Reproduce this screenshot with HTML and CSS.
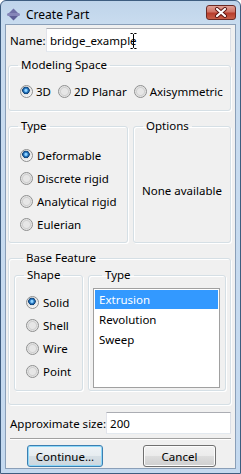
FILE: index.html
```html
<!DOCTYPE html>
<html lang="en">
<head>
  <meta charset="UTF-8">
  <title>Create Part</title>
  <link rel="stylesheet" href="styles.css">
</head>
<body>
  <div class="window">
    <div class="titlebar">
      <svg class="app-icon" width="13" height="13" viewBox="0 0 13 13">
        <polygon points="6.5,0.5 11,5 2,5" fill="#6f6fa6"/>
        <polygon points="6.5,12.5 11,8 2,8" fill="#5d5d96"/>
        <rect x="0" y="5" width="13" height="3" rx="1.5" fill="#8585b8"/>
      </svg>
      <span class="title">Create Part</span>
      <div class="close-btn">
        <svg width="14" height="11" viewBox="0 0 14 11">
          <path d="M3 2 L11 9 M11 2 L3 9" stroke="#5b1410" stroke-width="4" stroke-linecap="round"/>
          <path d="M3 2 L11 9 M11 2 L3 9" stroke="#fff" stroke-width="2.2" stroke-linecap="round"/>
        </svg>
      </div>
    </div>

    <div class="client">
      <div class="field-row name-row">
        <label>Name:</label>
        <div class="textbox name-box">
          <span>bridge_example</span>
          <svg class="ibeam" width="7" height="16" viewBox="0 0 7 16">
            <path d="M0.5 0.5 H2.5 L3.5 1.5 L4.5 0.5 H6.5 M3.5 1.5 V14.5 M0.5 15.5 H2.5 L3.5 14.5 L4.5 15.5 H6.5" stroke="#000" stroke-width="1" fill="none"/>
          </svg>
        </div>
      </div>

      <fieldset class="group space-group">
        <legend>Modeling Space</legend>
        <div class="radio-line">
          <span class="radio checked"></span><span class="radio-text">3D</span>
          <span class="radio"></span><span class="radio-text">2D Planar</span>
          <span class="radio"></span><span class="radio-text">Axisymmetric</span>
        </div>
      </fieldset>

      <div class="pair">
        <fieldset class="group type-group">
          <legend>Type</legend>
          <div class="radio-list">
            <div class="radio-item"><span class="radio checked"></span>Deformable</div>
            <div class="radio-item"><span class="radio"></span>Discrete rigid</div>
            <div class="radio-item"><span class="radio"></span>Analytical rigid</div>
            <div class="radio-item"><span class="radio"></span>Eulerian</div>
          </div>
        </fieldset>
        <fieldset class="group options-group">
          <legend>Options</legend>
          <div class="none-text">None available</div>
        </fieldset>
      </div>

      <fieldset class="group base-group">
        <legend>Base Feature</legend>
        <div class="pair inner-pair">
          <fieldset class="group shape-group">
            <legend>Shape</legend>
            <div class="radio-list">
              <div class="radio-item"><span class="radio checked"></span>Solid</div>
              <div class="radio-item"><span class="radio"></span>Shell</div>
              <div class="radio-item"><span class="radio"></span>Wire</div>
              <div class="radio-item"><span class="radio"></span>Point</div>
            </div>
          </fieldset>
          <fieldset class="group list-group">
            <legend>Type</legend>
            <div class="listbox">
              <div class="list-item selected">Extrusion</div>
              <div class="list-item">Revolution</div>
              <div class="list-item">Sweep</div>
            </div>
          </fieldset>
        </div>
      </fieldset>

      <div class="field-row size-row">
        <label>Approximate size:</label>
        <div class="textbox size-box">200</div>
      </div>

      <div class="separator"></div>

      <div class="buttons">
        <div class="button default">Continue...</div>
        <div class="button">Cancel</div>
      </div>
    </div>
  </div>
</body>
</html>
```

FILE: styles.css
```css
html, body {
  margin: 0;
  padding: 0;
}

body {
  width: 241px;
  height: 474px;
  font-family: 'Noto Sans', 'Open Sans', sans-serif;
  font-size: 11.5px;
  color: #000;
  overflow: hidden;
}

.window {
  box-sizing: border-box;
  width: 241px;
  height: 474px;
  border: 1px solid #3e5d80;
  border-radius: 6px 6px 0 0;
  background: linear-gradient(to bottom, #bfd4ea 0px, #c9dcef 24px, #c4d9ef 100%);
  display: flex;
  flex-direction: column;
  padding: 0 4px 4px 4px;
}

.titlebar {
  height: 23px;
  display: flex;
  align-items: center;
  padding-left: 2px;
}

.app-icon {
  margin-top: 3px;
}

.title {
  margin-left: 6px;
  margin-top: 4px;
  font-size: 12px;
}

.close-btn {
  margin-left: auto;
  margin-right: 0;
  align-self: flex-start;
  margin-top: 4px;
  width: 30px;
  height: 15px;
  box-sizing: border-box;
  border: 1px solid #6b2a25;
  border-radius: 3px;
  background: linear-gradient(to bottom, #e0a096 0%, #d17466 45%, #b83d2c 55%, #c85f48 100%);
  display: flex;
  align-items: center;
  justify-content: center;
}

.client {
  flex: 1;
  background: #f0f0f0;
  border: 1px solid #8a9fb8;
  padding: 3px 4px 0 2px;
}

.field-row {
  display: flex;
  align-items: center;
}

.field-row label {
  margin-left: 2px;
  white-space: nowrap;
}

.textbox {
  box-sizing: border-box;
  background: #fff;
  border: 1px solid #abadb3;
  border-right-color: #dbdfe6;
  border-bottom-color: #e3e9ef;
  border-left-color: #e2e3ea;
  display: flex;
  align-items: center;
  padding-left: 3px;
}

.name-box {
  position: relative;
  margin-left: auto;
  width: 185px;
  height: 24px;
}

.ibeam {
  position: absolute;
  left: 83px;
  top: 4px;
}

.group {
  margin: 0;
  padding: 0;
  border: 1px solid #d5dfe5;
  border-radius: 3px;
  box-shadow: inset 1px 1px 0 #fff, 1px 1px 0 #fff;
  min-width: 0;
}

.group legend {
  margin-left: 9px;
  padding: 0 3px;
  line-height: 14px;
}

.space-group {
  margin-top: 6px;
  height: 53px;
  box-sizing: border-box;
}

.radio-line {
  display: flex;
  align-items: center;
  height: 16px;
  margin-top: 11px;
  padding-left: 11px;
}

.radio-line .radio-text {
  margin-left: 3px;
  margin-right: 7px;
}

.radio {
  display: inline-block;
  box-sizing: border-box;
  width: 13px;
  height: 13px;
  border-radius: 50%;
  border: 1px solid #8e8f8f;
  background: radial-gradient(circle at 50% 50%, #e6e6e6 0 3px, #d0d0d0 4px, #f4f4f4 6px);
  flex-shrink: 0;
}

.radio.checked {
  background: radial-gradient(circle at 45% 40%, #8fd3ff 0 1px, #2b7dc8 2px, #0e3f73 3.5px, #e0e0e0 4px, #f4f4f4 6px);
}

.pair {
  display: flex;
  margin-top: 8px;
  gap: 5px;
}

.type-group {
  width: 120px;
  height: 124px;
  box-sizing: border-box;
}

.options-group {
  flex: 1;
  height: 124px;
  box-sizing: border-box;
  display: flex;
  flex-direction: column;
}

.none-text {
  text-align: center;
  margin-top: 50px;
}

.radio-list {
  display: flex;
  flex-direction: column;
  gap: 7px;
  padding-top: 14px;
  padding-left: 11px;
}

.radio-item {
  display: flex;
  align-items: center;
  height: 16px;
  white-space: nowrap;
}

.radio-item .radio {
  margin-right: 4px;
}

.base-group {
  margin-top: 8px;
  height: 154px;
  box-sizing: border-box;
  padding: 0 4px 0 5px;
}

.inner-pair {
  margin-top: 3px;
}

.shape-group {
  width: 69px;
  height: 123px;
  box-sizing: border-box;
}

.shape-group .radio-list {
  padding-top: 12px;
}

.list-group {
  flex: 1;
  height: 123px;
  box-sizing: border-box;
  padding: 0 5px 0 4px;
}

.listbox {
  margin-top: 6px;
  height: 100px;
  box-sizing: border-box;
  background: #fff;
  border: 1px solid #a0a0a0;
  padding: 1px;
}

.list-item {
  height: 19px;
  line-height: 19px;
  padding-left: 4px;
  margin-bottom: 1px;
}

.list-item.selected {
  background: #3399ff;
  color: #fff;
}

.size-row {
  margin-top: 7px;
}

.size-box {
  margin-left: auto;
  width: 127px;
  height: 22px;
}

.separator {
  margin-top: 4px;
  height: 1px;
  background: #a0a0a0;
  border-bottom: 1px solid #fff;
  margin-left: 2px;
}

.buttons {
  display: flex;
  margin-top: 5px;
  padding-left: 19px;
  gap: 40px;
}

.button {
  box-sizing: border-box;
  width: 76px;
  height: 22px;
  border: 1px solid #707070;
  border-radius: 3px;
  background: linear-gradient(to bottom, #f2f2f2 0%, #ebebeb 50%, #dddddd 51%, #cfcfcf 100%);
  box-shadow: inset 0 0 0 1px #fcfcfc;
  display: flex;
  align-items: center;
  justify-content: center;
}

.button.default {
  border-color: #3c7fb1;
  box-shadow: inset 0 0 0 1px #8fd8f8;
  background: linear-gradient(to bottom, #eef3f6 0%, #e6ecf0 50%, #d6dfe5 51%, #cdd7de 100%);
}

.buttons .button:last-child {
  width: 73px;
}
```
